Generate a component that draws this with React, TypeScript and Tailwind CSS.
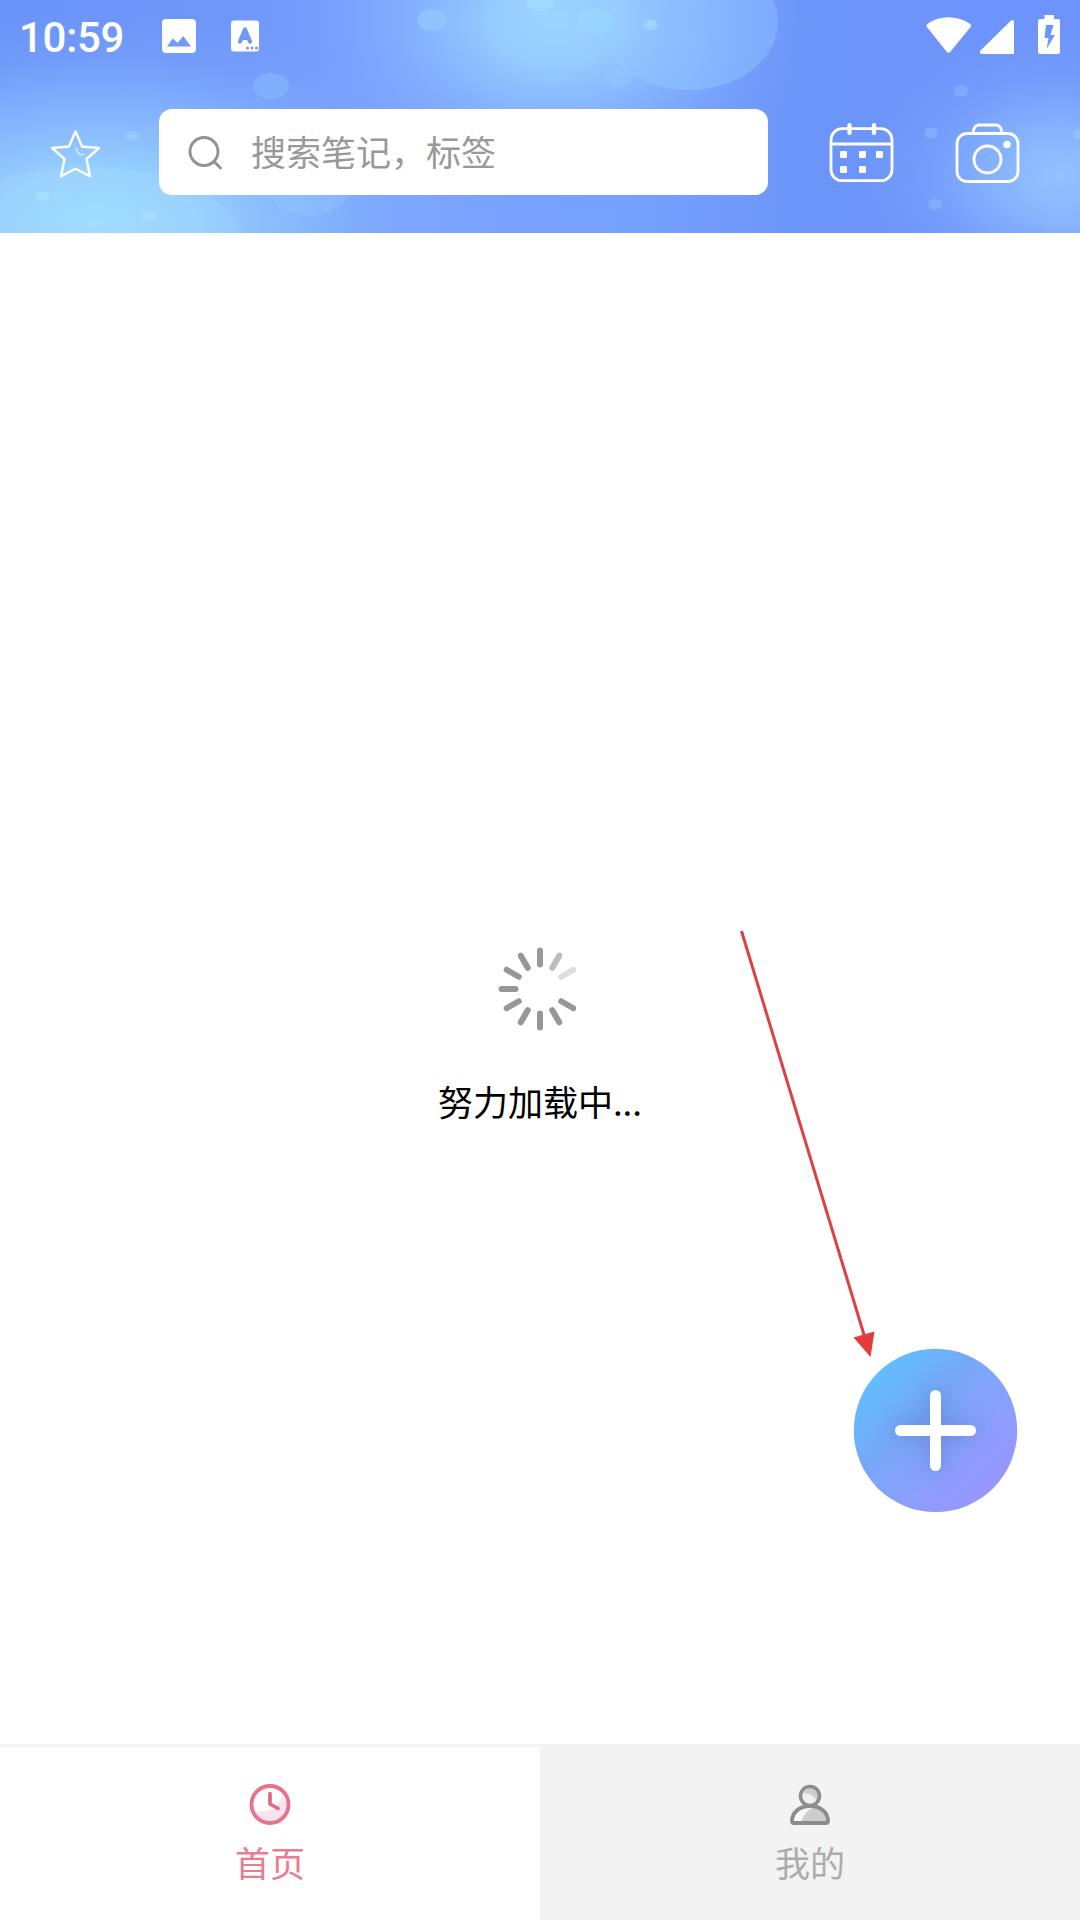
import React from 'react';

const cjk = "font-['Noto_Sans_CJK_SC',sans-serif]";

function HeaderArt() {
  return (
    <svg className="absolute inset-0 h-full w-full" viewBox="0 0 1080 233" preserveAspectRatio="none" aria-hidden="true">
      <defs>
        <radialGradient id="glowLeft" gradientUnits="userSpaceOnUse" cx="0" cy="0" r="1" gradientTransform="translate(95 225) scale(400 215)">
          <stop offset="0" stopColor="#a0dcff" />
          <stop offset="0.25" stopColor="#9ad4ff" stopOpacity="0.95" />
          <stop offset="0.58" stopColor="#8abaff" stopOpacity="0.7" />
          <stop offset="0.8" stopColor="#7fabff" stopOpacity="0.3" />
          <stop offset="1" stopColor="#7aa4ff" stopOpacity="0" />
        </radialGradient>
        <radialGradient id="glowTop" gradientUnits="userSpaceOnUse" cx="0" cy="0" r="1" gradientTransform="translate(555 20) scale(255 185)">
          <stop offset="0" stopColor="#9cd5ff" />
          <stop offset="0.25" stopColor="#98cfff" stopOpacity="0.92" />
          <stop offset="0.6" stopColor="#88b5ff" stopOpacity="0.6" />
          <stop offset="0.8" stopColor="#80abff" stopOpacity="0.28" />
          <stop offset="1" stopColor="#7aa4ff" stopOpacity="0" />
        </radialGradient>
        <radialGradient id="glowRight" gradientUnits="userSpaceOnUse" cx="0" cy="0" r="1" gradientTransform="translate(1060 175) scale(205 145)">
          <stop offset="0" stopColor="#93c2ff" />
          <stop offset="0.35" stopColor="#8ab6ff" stopOpacity="0.85" />
          <stop offset="0.7" stopColor="#7da6ff" stopOpacity="0.4" />
          <stop offset="1" stopColor="#7aa2ff" stopOpacity="0" />
        </radialGradient>
        <linearGradient id="base" x1="0" x2="1" y1="0" y2="0">
          <stop offset="0" stopColor="#6a93f8" />
          <stop offset="0.2" stopColor="#6f97fa" />
          <stop offset="0.38" stopColor="#7ba4ff" />
          <stop offset="0.6" stopColor="#76a0fe" />
          <stop offset="0.74" stopColor="#6c95f9" />
          <stop offset="1" stopColor="#6d94fb" />
        </linearGradient>
        <linearGradient id="bubble" x1="0" x2="1" y1="0" y2="0">
          <stop offset="0" stopColor="#9ad2ff" stopOpacity="0.2" />
          <stop offset="0.5" stopColor="#92c6ff" stopOpacity="0.5" />
          <stop offset="1" stopColor="#88b7ff" stopOpacity="0.6" />
        </linearGradient>
      </defs>
      <rect width="1080" height="233" fill="url(#base)" />
      <rect width="1080" height="233" fill="url(#glowLeft)" />
      <rect width="1080" height="233" fill="url(#glowTop)" />
      <rect width="1080" height="233" fill="url(#glowRight)" />
      <ellipse cx="689" cy="22" rx="89" ry="68" fill="url(#bubble)" />
      <path d="M0 180C70 155 180 170 210 196C228 208 238 220 243 233H0Z" fill="#a4dfff" opacity="0.17" />
      <path d="M1018 183C1035 196 1043 215 1046 233H1080V150Z" fill="#98c5ff" opacity="0.15" />
      <g fill="#9fd4ff">
        <ellipse cx="310" cy="188" rx="40" ry="28" opacity="0.22" />
        <ellipse cx="271" cy="86" rx="18" ry="13" opacity="0.27" />
        <ellipse cx="432" cy="20" rx="15" ry="11" opacity="0.4" />
        <ellipse cx="540" cy="1" rx="14" ry="10" fill="#a5e3ff" opacity="0.5" />
        <ellipse cx="596" cy="21" rx="18" ry="14" fill="#9be0ff" opacity="0.3" />
        <ellipse cx="619" cy="77" rx="14" ry="11" opacity="0.22" />
        <ellipse cx="651" cy="25" rx="7" ry="5" fill="#b0e6ff" opacity="0.45" />
        <ellipse cx="132" cy="136" rx="7" ry="5" opacity="0.5" />
        <ellipse cx="43" cy="196" rx="7" ry="5" fill="#b4e6ff" opacity="0.4" />
        <ellipse cx="149" cy="216" rx="7" ry="5" fill="#b4e6ff" opacity="0.45" />
        <ellipse cx="961" cy="91" rx="7" ry="5.5" opacity="0.28" />
        <ellipse cx="931" cy="133" rx="7" ry="5.5" opacity="0.32" />
        <ellipse cx="935" cy="204" rx="7" ry="5.5" opacity="0.28" />
        <ellipse cx="1079" cy="134" rx="6" ry="5" opacity="0.4" />
      </g>
    </svg>
  );
}

function StatusBar() {
  return (
    <div className="relative flex h-[72px] items-center pl-[19px] text-white">
      <span className="w-[142px] pt-[3px] font-[Roboto] text-[42px] leading-none font-medium tracking-[-0.3px]">10:59</span>
      <svg className="h-[36px] w-[36px]" viewBox="0 0 36 36">
        <path fillRule="evenodd" fill="#fff" d="M5 1H31Q35 1 35 5V31Q35 35 31 35H5Q1 35 1 31V5Q1 1 5 1ZM6 28.5H30L22.2 18L16.5 25L11.8 20.5Z" />
      </svg>
      <svg className="ml-[33px] h-[36px] w-[30px]" viewBox="0 0 30 36">
        <path fill="#fff" d="M4 2.500H26Q29 2.500 29 5.500V30.500Q29 33.500 26 33.500H4Q1 33.500 1 30.500V5.500Q1 2.500 4 2.500Z" />
        <path d="M10 23.500L15 11.500L20 23.500M11.500 20H18.500" fill="none" stroke="#6f98f8" strokeWidth="4.200" strokeLinecap="round" strokeLinejoin="round" />
        <path d="M17.500 30h.01M22 30h.01M26.500 30h.01" stroke="#6f98f8" strokeWidth="3" strokeLinecap="round" />
      </svg>
      <div className="ml-auto flex pr-[19px]">
        <svg className="h-[44px] w-[136px]" viewBox="925 14 136 44">
          <path d="M926.500 26.500Q926 24.700 928 23.500C940 15 957 15 969.500 23.500Q971.500 24.700 971 26.500L950.500 51.500Q948.500 54 946.500 51.500Z" fill="#fff" />
          <path d="M1014 21.500V54H981.500Q979 53.500 980.500 50.500L1011 20.500Q1013 19 1014 21.500Z" fill="#fff" />
          <path fillRule="evenodd" fill="#fff" d="M1044.500 15H1054V19H1058Q1060 19 1060 21V52Q1060 54 1058 54H1040Q1038 54 1038 52V21Q1038 19 1040 19H1044.500ZM1046 25L1044.500 38H1048.500L1046.500 49L1055 35H1050.500L1053.500 25Z" />
        </svg>
      </div>
    </div>
  );
}

function SearchRow() {
  return (
    <div className="relative mt-[37px] flex h-[86px] items-center">
      <svg className="mt-[1px] ml-[49px] h-[54px] w-[54px]" viewBox="49 126 54 54" fill="none" stroke="#fff">
        <path d="M75.500 131.500L82 146.500L99 148L86.500 159L90 176.200L75.500 168.800L61 176.200L64.500 159L52 148L69 146.500Z" strokeWidth="2.400" strokeLinejoin="round" />
        <path d="M76 147.500Q77 153 80 154.500H85" stroke="#c5ecff" strokeWidth="1.700" />
      </svg>
      <div className="ml-[56px] flex h-[86px] w-[609px] items-center rounded-[13px] bg-white">
        <svg className="ml-[28px] h-[38px] w-[38px]" viewBox="0 0 38 38" fill="none" stroke="#929292" strokeWidth="2.900">
          <circle cx="17" cy="18.500" r="14" />
          <path d="M27 28.500L33.500 35" strokeLinecap="round" strokeWidth="3" />
        </svg>
        <span className={`${cjk} ml-[26px] pb-[4px] text-[35px] leading-none font-normal text-[#999999]`}>搜索笔记，标签</span>
      </div>
      <svg className="mt-[2px] ml-[60px] h-[62px] w-[66px]" viewBox="828 122 66 62" fill="none" stroke="#fff" strokeWidth="2.800">
        <rect x="831" y="128.700" width="61" height="52" rx="11" />
        <path d="M831 144H892" />
        <path d="M849.500 125V133M874 125V133" strokeWidth="4.200" strokeLinecap="round" />
        <g fill="#fff" stroke="none">
          <rect x="840" y="151" width="7" height="7" rx="1.200" /><rect x="859" y="151" width="7" height="7" rx="1.200" /><rect x="876" y="151" width="7" height="7" rx="1.200" />
          <rect x="840" y="166" width="7" height="7" rx="1.200" /><rect x="859" y="166" width="7" height="7" rx="1.200" />
        </g>
      </svg>
      <svg className="mt-[2px] ml-[60px] h-[62px] w-[66px]" viewBox="954 122 66 62" fill="none" stroke="#fff" strokeWidth="2.800">
        <rect x="957" y="133.500" width="61" height="48" rx="10" />
        <path d="M973.500 133V130Q975 125 979 125H996Q1000 125 1001.500 130V133" />
        <circle cx="987.500" cy="159.500" r="13.500" />
        <circle cx="1007" cy="144.500" r="3.700" fill="#fff" stroke="none" />
      </svg>
    </div>
  );
}

const spokes = [
  { angle: 0, color: '#999999' },
  { angle: 30, color: '#bdbdbd' },
  { angle: 60, color: '#dddddd' },
  { angle: 120, color: '#979797' },
  { angle: 150, color: '#979797' },
  { angle: 180, color: '#979797' },
  { angle: 210, color: '#979797' },
  { angle: 240, color: '#979797' },
  { angle: 270, color: '#979797' },
  { angle: 300, color: '#979797' },
  { angle: 330, color: '#979797' },
];

function Spinner() {
  return (
    <svg className="h-[88px] w-[88px]" viewBox="-44 -44 88 88">
      <clipPath id="spinnerEdge"><rect x="-44" y="-44" width="80" height="88" /></clipPath>
      <g clipPath="url(#spinnerEdge)">
        {spokes.map((s) => (
          <path key={s.angle} d="M0 -38.500V-24.500" transform={`rotate(${s.angle})`} stroke={s.color} strokeWidth="6" strokeLinecap="round" />
        ))}
      </g>
    </svg>
  );
}

function AddButton() {
  return (
    <button className="absolute top-[1348px] left-[853px] flex h-[165px] w-[165px] items-center justify-center" aria-label="Add">
      <svg className="h-full w-full" viewBox="853 1348 165 165">
        <defs>
          <linearGradient id="addFill" x1="0.12" y1="0.14" x2="0.86" y2="0.88">
            <stop offset="0" stopColor="#60bfff" />
            <stop offset="0.35" stopColor="#76a8f8" />
            <stop offset="0.7" stopColor="#8c9ffc" />
            <stop offset="1" stopColor="#9894ff" />
          </linearGradient>
          <filter id="plusShade" x="-50%" y="-50%" width="200%" height="200%"><feGaussianBlur stdDeviation="11" /></filter>
        </defs>
        <circle cx="935.500" cy="1430.400" r="81.700" fill="url(#addFill)" />
        <path d="M935.500 1395.500V1465.500M900.500 1430.500H970.500" stroke="#4b72c5" strokeOpacity="0.550" strokeWidth="14" strokeLinecap="round" filter="url(#plusShade)" />
        <path d="M935.500 1395.500V1465.500M900.500 1430.500H970.500" stroke="#fff" strokeWidth="11" strokeLinecap="round" />
      </svg>
    </button>
  );
}

function Pointer() {
  return (
    <svg className="absolute top-[926px] left-[735px] h-[436px] w-[146px]" viewBox="735 926 146 436">
      <path d="M741.500 931L865 1338" stroke="#dc4145" strokeWidth="3" />
      <path d="M853.500 1337.500L874.500 1331.500L870.500 1357Z" fill="#e53b3d" />
    </svg>
  );
}

function BottomNav() {
  return (
    <nav className="flex h-[176px]">
      <div className="flex w-1/2 flex-col items-center border-t-[3px] border-[#f3f3f3] bg-white pt-[35px]">
        <svg className="h-[44px] w-[44px]" viewBox="0 0 44 44" fill="none">
          <circle cx="22" cy="22.500" r="18.500" fill="#fff" />
          <path d="M8 29Q29 31 34 14C39 19 40 27 36 33C28 43 14 42 8 32Z" fill="#fbe3ed" />
          <circle cx="22" cy="22.500" r="18.500" stroke="#e57489" strokeWidth="3.800" />
          <path d="M22 11.500V22L30 26.500" stroke="#de6b83" strokeWidth="3.700" strokeLinecap="round" strokeLinejoin="round" />
        </svg>
        <span className={`${cjk} mt-[18px] text-[35px] leading-none font-normal text-[#e87c90]`}>首页</span>
      </div>
      <div className="flex w-1/2 flex-col items-center bg-[#f3f3f3] pt-[38px]">
        <svg className="h-[44px] w-[44px]" viewBox="0 0 44 44" fill="none">
          <path d="M4 40C3 31 11 24 22 24S41 31 40 40Q40 41 39 41H5Q4 41 4 40Z" fill="#f8f8f8" />
          <path d="M13 41C15 31 23 25 30 25C37 29 40 35 40 41Z" fill="#cdcdcd" />
          <path d="M4 39C4 31 11 24 22 24S40 31 40 39Q40 41 38 41H6Q4 41 4 39Z" stroke="#8d8d8d" strokeWidth="3.800" />
          <circle cx="22" cy="14" r="9.500" fill="#f0f0f0" />
          <path d="M15 11Q19 6 25 5Q32 8 32 15Q31 20 29 22Q28 12 15 11Z" fill="#cdcdcd" />
          <circle cx="22" cy="14" r="9.500" stroke="#8d8d8d" strokeWidth="3.500" />
        </svg>
        <span className={`${cjk} mt-[18px] text-[35px] leading-none font-normal text-[#acacac]`}>我的</span>
      </div>
    </nav>
  );
}

export default function App() {
  return (
    <div className="relative flex h-[1920px] w-[1080px] flex-col overflow-hidden bg-white">
      <header className="relative h-[233px] shrink-0">
        <HeaderArt />
        <StatusBar />
        <SearchRow />
      </header>
      <main className="flex grow flex-col items-center pt-[712px]">
        <Spinner />
        <p className={`${cjk} mt-[50px] text-[35px] leading-none font-normal text-black`}>努力加载中...</p>
      </main>
      <BottomNav />
      <AddButton />
      <Pointer />
    </div>
  );
}
